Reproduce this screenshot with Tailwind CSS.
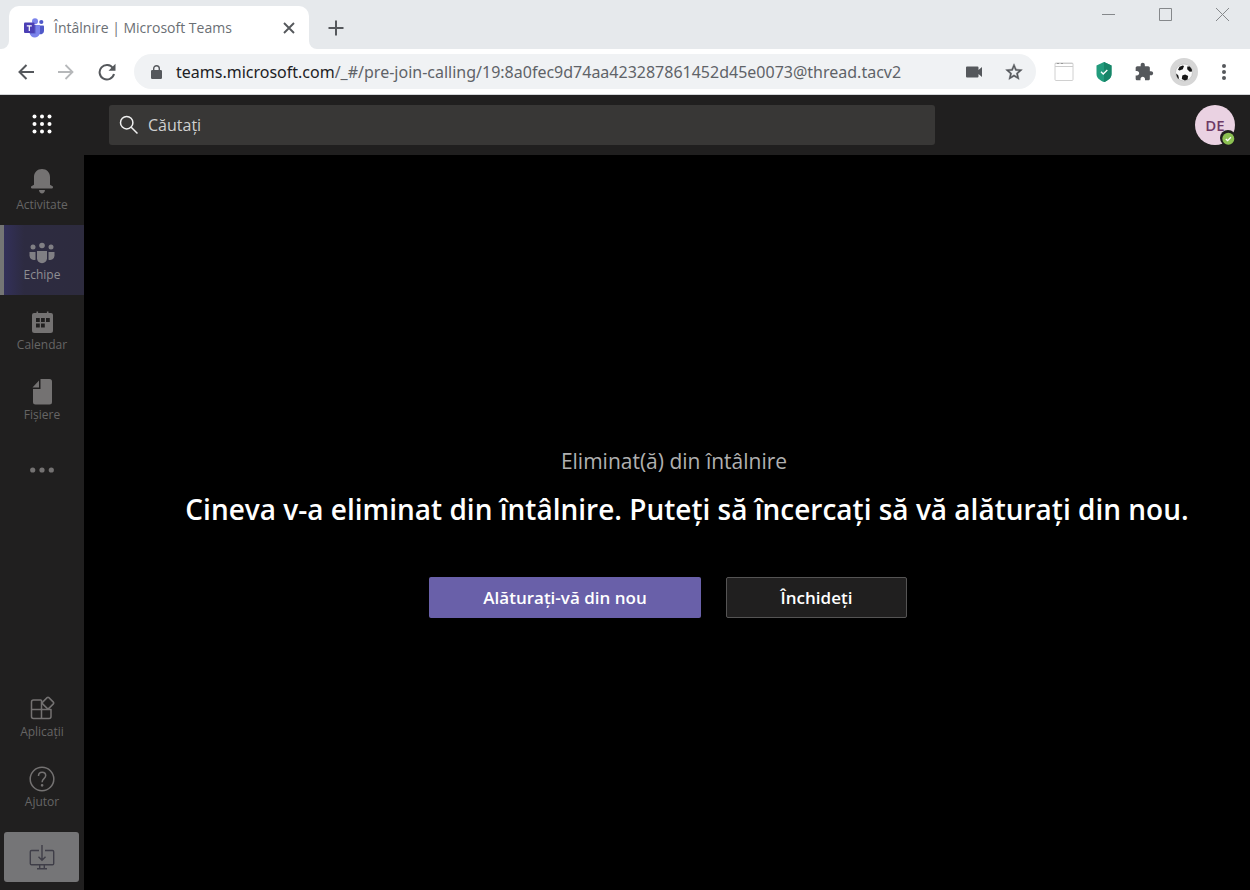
<!DOCTYPE html>
<html lang="ro">
<head>
<meta charset="utf-8">
<meta name="viewport" content="width=device-width, initial-scale=1">
<title>Întâlnire | Microsoft Teams</title>
<script src="https://cdn.jsdelivr.net/npm/@tailwindcss/browser@4"></script>
</head>
<body class="flex min-h-screen flex-col bg-black font-['Open_Sans','Noto_Sans',sans-serif]">

<!-- Browser tab strip -->
<div class="flex h-[49px] shrink-0 items-end bg-[#e6e9ec] pl-px">
  <div class="h-2 w-2 bg-white"><div class="h-2 w-2 rounded-br-lg bg-[#e6e9ec]"></div></div>
  <div class="flex h-[43px] w-[300px] items-center rounded-t-[10px] bg-white pr-[10px] pl-[15px]">
    <svg class="h-5 w-5 shrink-0" viewBox="0 0 20 20">
      <circle cx="17.300" cy="4" r="2.100" fill="#5059c9"/>
      <path d="M13 7.500h6.200a.8.800 0 0 1 .8.800v4.700a3.500 3.500 0 0 1-5 3z" fill="#5059c9"/>
      <circle cx="11" cy="3.200" r="3" fill="#7b83eb"/>
      <path d="M6 7h9.200a.8.800 0 0 1 .8.800v6.200a5.200 5.200 0 0 1-10.400.6z" fill="#7b83eb"/>
      <path d="M6 7h5.500v8.500H5.800z" fill="#5558c0"/>
      <rect x="0" y="4.500" width="10.500" height="10.500" rx="1" fill="#4b3fb5"/>
      <path d="M2.800 7.300h5v1.200H5.900v4.600H4.700V8.500H2.800z" fill="#fff"/>
    </svg>
    <span class="ml-[10px] flex-1 whitespace-nowrap text-sm text-[#6b6f74]">Întâlnire | Microsoft Teams</span>
    <button class="p-1" aria-label="Închide fila"><svg class="h-3 w-3" viewBox="0 0 12 12" stroke="#55585c" stroke-width="1.900"><path d="M1 1l10 10M11 1L1 11"/></svg></button>
  </div>
  <div class="h-2 w-2 bg-white"><div class="h-2 w-2 rounded-bl-lg bg-[#e6e9ec]"></div></div>
  <button class="mb-[13px] ml-[11px]" aria-label="Filă nouă"><svg class="h-4 w-4" viewBox="0 0 16 16" stroke="#55585c" stroke-width="2"><path d="M8 .5v15M.5 8h15"/></svg></button>
  <div class="ml-auto flex gap-11 self-start pt-2 pr-[21px]">
    <button aria-label="Minimizează"><svg class="h-[13px] w-[13px]" viewBox="0 0 13 13" fill="none" stroke="#85888b"><path d="M0 6.500h13"/></svg></button>
    <button aria-label="Maximizează"><svg class="h-[13px] w-[13px]" viewBox="0 0 13 13" fill="none" stroke="#85888b"><path d="M.5.500h12v12H.5z"/></svg></button>
    <button aria-label="Închide"><svg class="h-[13px] w-[13px]" viewBox="0 0 13 13" fill="none" stroke="#85888b"><path d="M0 0l13 13M13 0L0 13"/></svg></button>
  </div>
</div>

<!-- Browser toolbar -->
<div class="flex h-[46px] shrink-0 items-center border-b border-[#d3d5d8] bg-white pr-5">
  <button class="ml-[18px]" aria-label="Înapoi"><svg class="h-4 w-4" viewBox="0 0 16 16" fill="none" stroke="#55585c" stroke-width="2"><path d="M16 8H1.500M8.500 1L1.500 8l7 7"/></svg></button>
  <button class="ml-6" aria-label="Înainte"><svg class="h-4 w-4" viewBox="0 0 16 16" fill="none" stroke="#b6b8ba" stroke-width="1.800"><path d="M0 8h14.500M7.500 1l7 7-7 7"/></svg></button>
  <button class="ml-6" aria-label="Reîncarcă"><svg class="h-[18px] w-[18px]" viewBox="0 0 18 18" fill="none" stroke="#55585c" stroke-width="2"><path d="M15 5.200A7.300 7.300 0 1 0 16 11"/><path d="M17.500.8v7h-7z" fill="#55585c" stroke="none"/></svg></button>
  <div class="ml-[18px] flex h-[35px] flex-1 items-center rounded-full bg-[#f0f2f4] pr-3 pl-[17px]">
    <svg class="h-[14px] w-[11px] shrink-0" viewBox="0 0 11 14"><path d="M1.200 5h8.600a1.200 1.200 0 0 1 1.200 1.200v6.600a1.200 1.200 0 0 1-1.200 1.200H1.200A1.200 1.200 0 0 1 0 12.800V6.200A1.200 1.200 0 0 1 1.200 5z" fill="#55585c"/><path d="M2.700 5.500V3.500a2.800 2.800 0 0 1 5.600 0v2" fill="none" stroke="#55585c" stroke-width="1.400"/></svg>
    <a href="#" class="ml-[14px] flex-1 whitespace-nowrap font-['Noto_Sans','Open_Sans',sans-serif] text-base text-[#5f6368]"><span class="text-[#202124]">teams.microsoft.com</span>/_#/pre-join-calling/19:8a0fec9d74aa423287861452d45e0073@thread.tacv2</a>
    <button aria-label="Cameră"><svg class="h-3 w-4" viewBox="0 0 16 12" fill="#55585c"><path d="M1 .5h10.500a1 1 0 0 1 1 1V4L16 1v10l-3.500-3v2.500a1 1 0 0 1-1 1H1a1 1 0 0 1-1-1v-9a1 1 0 0 1 1-1z"/></svg></button>
    <button class="ml-[22px]" aria-label="Marcaj"><svg class="h-5 w-5" viewBox="0 0 24 24" fill="#55585c" stroke="#55585c" stroke-width=".5"><path d="M22 9.240l-7.190-.620L12 2 9.190 8.630 2 9.240l5.460 4.730L5.820 21 12 17.270 18.180 21l-1.630-7.030L22 9.240zM12 15.400l-3.760 2.270 1-4.280-3.320-2.880 4.380-.380L12 6.100l1.710 4.040 4.380.380-3.320 2.880 1 4.280L12 15.400z"/></svg></button>
  </div>
  <button class="ml-[18px]" aria-label="Extensie"><svg class="h-5 w-5" viewBox="0 0 20 20" fill="none"><rect x="1" y="1" width="18" height="17.500" rx="1" fill="#fff" stroke="#d0d0d0"/><path d="M1 1.500h18M1 4.500h18" stroke="#cccccc"/><path d="M3 1.500h2M7 1.500h2" stroke="#999"/></svg></button>
  <button class="ml-[22px]" aria-label="Protecție"><svg class="h-5 w-4" viewBox="0 0 16 20"><path d="M8 0l7.500 3.500V12c0 4-3.500 6.500-7.500 8C4 18.500.5 16 .5 12V3.500z" fill="#229b7c"/><path d="M8 0l7.500 3.500V12c0 4-3.500 6.500-7.500 8z" fill="#178568"/><path d="M5 9.800l2.200 2.200L11.300 8" fill="none" stroke="#fff" stroke-width="1.300"/></svg></button>
  <button class="ml-[22px]" aria-label="Extensii"><svg class="h-5 w-5" viewBox="0 0 24 24" fill="#55585c"><path d="M20.500 11H19V7c0-1.100-.9-2-2-2h-4V3.500C13 2.120 11.880 1 10.500 1S8 2.120 8 3.500V5H4c-1.100 0-1.990.9-1.990 2v3.800H3.500c1.490 0 2.700 1.210 2.700 2.700s-1.210 2.700-2.700 2.700H2V20c0 1.100.9 2 2 2h3.800v-1.500c0-1.490 1.210-2.700 2.700-2.700 1.490 0 2.700 1.210 2.700 2.700V22H17c1.100 0 2-.9 2-2v-4h1.500c1.380 0 2.500-1.120 2.500-2.500S21.880 11 20.500 11z"/></svg></button>
  <button class="ml-4" aria-label="Profil"><svg class="h-7 w-7" viewBox="0 0 28 28"><circle cx="14" cy="14" r="14" fill="#d6d6d6"/><circle cx="14" cy="14.500" r="8.500" fill="#fafafa" stroke="#bdbdbd" stroke-width=".7"/><g fill="#161616"><path d="M12.300 17.500l2.800-.9 3 1.500-.5 3.400-2.800 1-3-1.600z"/><path d="M8 11.800l1.500-3 3.200-1.300 1.300.6-1.200 3.200-3.200 1.200z"/><path d="M17.300 8.600l2.500-.2 2 2.800.2 2.300-2.300.3-2.500-2.500z"/><path d="M6.200 15.500l2 1.800.8 3.300-1 .1a8 8 0 0 1-1.800-5.200z"/></g></svg></button>
  <button class="ml-5 px-1" aria-label="Meniu"><svg class="h-4 w-1" viewBox="0 0 4 16" fill="#55585c"><circle cx="2" cy="2" r="2"/><circle cx="2" cy="8" r="2"/><circle cx="2" cy="14" r="2"/></svg></button>
</div>

<!-- Teams header -->
<header class="flex h-[60px] shrink-0 items-center bg-[#201f1f] pr-[15px]">
  <div class="flex w-[84px] justify-center pb-0.5">
    <button aria-label="Lansator de aplicații"><svg class="h-5 w-5" viewBox="0 0 20 20" fill="#fff"><circle cx="2.500" cy="2.500" r="2"/><circle cx="10" cy="2.500" r="2"/><circle cx="17.500" cy="2.500" r="2"/><circle cx="2.500" cy="10" r="2"/><circle cx="10" cy="10" r="2"/><circle cx="17.500" cy="10" r="2"/><circle cx="2.500" cy="17.500" r="2"/><circle cx="10" cy="17.500" r="2"/><circle cx="17.500" cy="17.500" r="2"/></svg></button>
  </div>
  <label class="mr-[260px] ml-[25px] flex h-10 flex-1 items-center rounded-[3px] bg-[#383736] pl-[10px]">
    <svg class="h-5 w-5 shrink-0" viewBox="0 0 20 20" fill="none" stroke="#f0f0f0" stroke-width="1.500"><circle cx="7.700" cy="7.700" r="6.200"/><path d="M12.200 12.200l6.300 6.300"/></svg>
    <input type="search" aria-label="Căutați" placeholder="Căutați" class="ml-[9px] min-w-0 flex-1 bg-transparent text-base text-white outline-none placeholder:text-[#cfcfcf]">
  </label>
  <button class="relative h-10 w-10 rounded-full bg-[#ead2e2] text-[15px] font-semibold text-[#6e3a66]">DE
    <svg class="absolute -right-px -bottom-px h-4 w-4" viewBox="0 0 16 16"><circle cx="8" cy="8" r="8" fill="#201f1f"/><circle cx="8.300" cy="8.800" r="6" fill="#8cc152"/><path d="M5.800 9l1.800 1.700 3.300-3.500" fill="none" stroke="#fff" stroke-width="1.300"/></svg>
  </button>
</header>

<div class="flex flex-1">
  <!-- App rail -->
  <nav class="flex w-[84px] shrink-0 flex-col bg-[#201f1f] text-xs leading-4 text-[#666565]">
    <button class="flex h-[70px] flex-col items-center gap-px pt-[13px]">
      <svg class="h-7 w-7" viewBox="0 0 28 28" fill="#747272"><path d="M14 1c4.600 0 8 3.400 8 8v7.700l2.600 1.600c.8.600.5 2.200-.7 2.200H4.100c-1.200 0-1.500-1.600-.7-2.200L6 16.700V9c0-4.600 3.400-8 8-8z"/><path d="M11 22h6c-.2 2-1.400 3.500-3 3.500S11.200 24 11 22z"/></svg>
      <span>Activitate</span>
    </button>
    <button class="flex h-[70px] flex-col items-center gap-px border-l-4 border-[#747575] bg-linear-to-r from-[#33305a] via-[#2d2b41] via-25% to-[#2d2b3e] pt-[13px] pr-1 text-[#8f8e93]">
      <svg class="h-7 w-7" viewBox="0 0 28 28" fill="#807f84"><circle cx="14" cy="7.500" r="2.800"/><circle cx="5" cy="8.900" r="2.500"/><circle cx="23" cy="8.900" r="2.500"/><path d="M9 13h10v7.200a5 5 0 0 1-10 0z"/><path d="M1.500 14h6v7.700a4.500 4.500 0 0 1-6-4zM20.500 14h6v3.700a4.500 4.500 0 0 1-6 4z"/></svg>
      <span>Echipe</span>
    </button>
    <button class="flex h-[70px] flex-col items-center gap-px pt-[13px]">
      <svg class="h-7 w-7" viewBox="0 0 28 28" fill="#747272"><path fill-rule="evenodd" d="M8.500 3.500h1.600V5h8.800V3.500h1.600V5H23a2 2 0 0 1 2 2v15.500a2.500 2.500 0 0 1-2.500 2.500h-16A2.500 2.500 0 0 1 4 22.500V7a2 2 0 0 1 2-2h2.500zM8 10v4h3.800v-4zM13 10v4h3.800v-4zM18 10v4h3.800v-4zM8 15.500v4h3.800v-4zM13 15.500v4h3.800v-4z"/></svg>
      <span>Calendar</span>
    </button>
    <button class="flex h-[70px] flex-col items-center gap-px pt-[13px]">
      <svg class="h-7 w-7" viewBox="0 0 28 28" fill="#747272"><path d="M12.500 1H21.500A2.500 2.500 0 0 1 24 3.500v20.500A2.500 2.500 0 0 1 21.500 26.500h-14A2.500 2.500 0 0 1 5 24V11h7.500z"/><path d="M11 2.500v7H4.500z"/></svg>
      <span>Fișiere</span>
    </button>
    <button class="flex h-[70px] items-center justify-center" aria-label="Mai multe"><svg class="h-[6px] w-6" viewBox="0 0 24 6" fill="#747272"><circle cx="2.700" cy="3" r="2.600"/><circle cx="12" cy="3" r="2.600"/><circle cx="21.300" cy="3" r="2.600"/></svg></button>
    <button class="mt-auto flex h-[70px] flex-col items-center gap-px pt-[13px]">
      <svg class="h-7 w-7" viewBox="0 0 28 28" fill="none" stroke="#747272" stroke-width="1.500" stroke-linejoin="round"><path d="M13.500 5H5.500a2 2 0 0 0-2 2v14.500a2 2 0 0 0 2 2h15.500a2 2 0 0 0 2-2v-7H3.500M13.500 5V23.500"/><rect x="15.600" y="3.600" width="8.800" height="8.800" rx="1.200" transform="rotate(45 20 8)"/></svg>
      <span>Aplicații</span>
    </button>
    <button class="flex h-[70px] flex-col items-center gap-px pt-[13px]">
      <svg class="h-7 w-7" viewBox="0 0 28 28" fill="none" stroke="#747272" stroke-width="1.500"><circle cx="14" cy="14" r="11.800"/><path d="M10.500 11c0-2.300 1.500-3.800 3.600-3.800s3.600 1.400 3.600 3.400c0 3.200-3.600 3-3.600 6.600"/><circle cx="14.100" cy="20.300" r=".6" fill="#747272"/></svg>
      <span>Ajutor</span>
    </button>
    <button class="mx-1 mt-[10px] mb-2 flex h-[50px] w-[75px] items-center justify-center rounded-[3px] bg-[#757577]" aria-label="Descărcați aplicația"><svg class="h-7 w-7" viewBox="0 0 28 28" fill="none" stroke="#3f3e48" stroke-width="1.400"><path d="M11 7.500H3.500a1.200 1.200 0 0 0-1.200 1.200v11.800a1.200 1.200 0 0 0 1.200 1.200h21a1.200 1.200 0 0 0 1.200-1.200V8.700a1.200 1.200 0 0 0-1.200-1.200H17M14 2v15M10.500 13.700L14 17.200l3.500-3.500M11.700 22v3.500M16.300 22v3.500M9 25.700h10"/></svg></button>
  </nav>

  <!-- Meeting ended message -->
  <main class="flex flex-1 flex-col items-center pt-[290px]">
    <p class="pl-[14px] text-[21px] leading-8 text-[#b0b0b0]">Eliminat(ă) din întâlnire</p>
    <h1 class="mt-3 pl-10 text-[28px] leading-10 font-semibold whitespace-nowrap text-white">Cineva v-a eliminat din întâlnire. Puteți să încercați să vă alăturați din nou.</h1>
    <div class="mt-12 flex gap-[25px] pl-0.5 text-[17px] font-semibold text-white">
      <button class="h-[41px] w-[272px] rounded-[2px] bg-[#6960a9]">Alăturați-vă din nou</button>
      <button class="h-[41px] w-[181px] rounded-[2px] border border-[#555454] bg-[#201f1f]">Închideți</button>
    </div>
  </main>
</div>
</body>
</html>
